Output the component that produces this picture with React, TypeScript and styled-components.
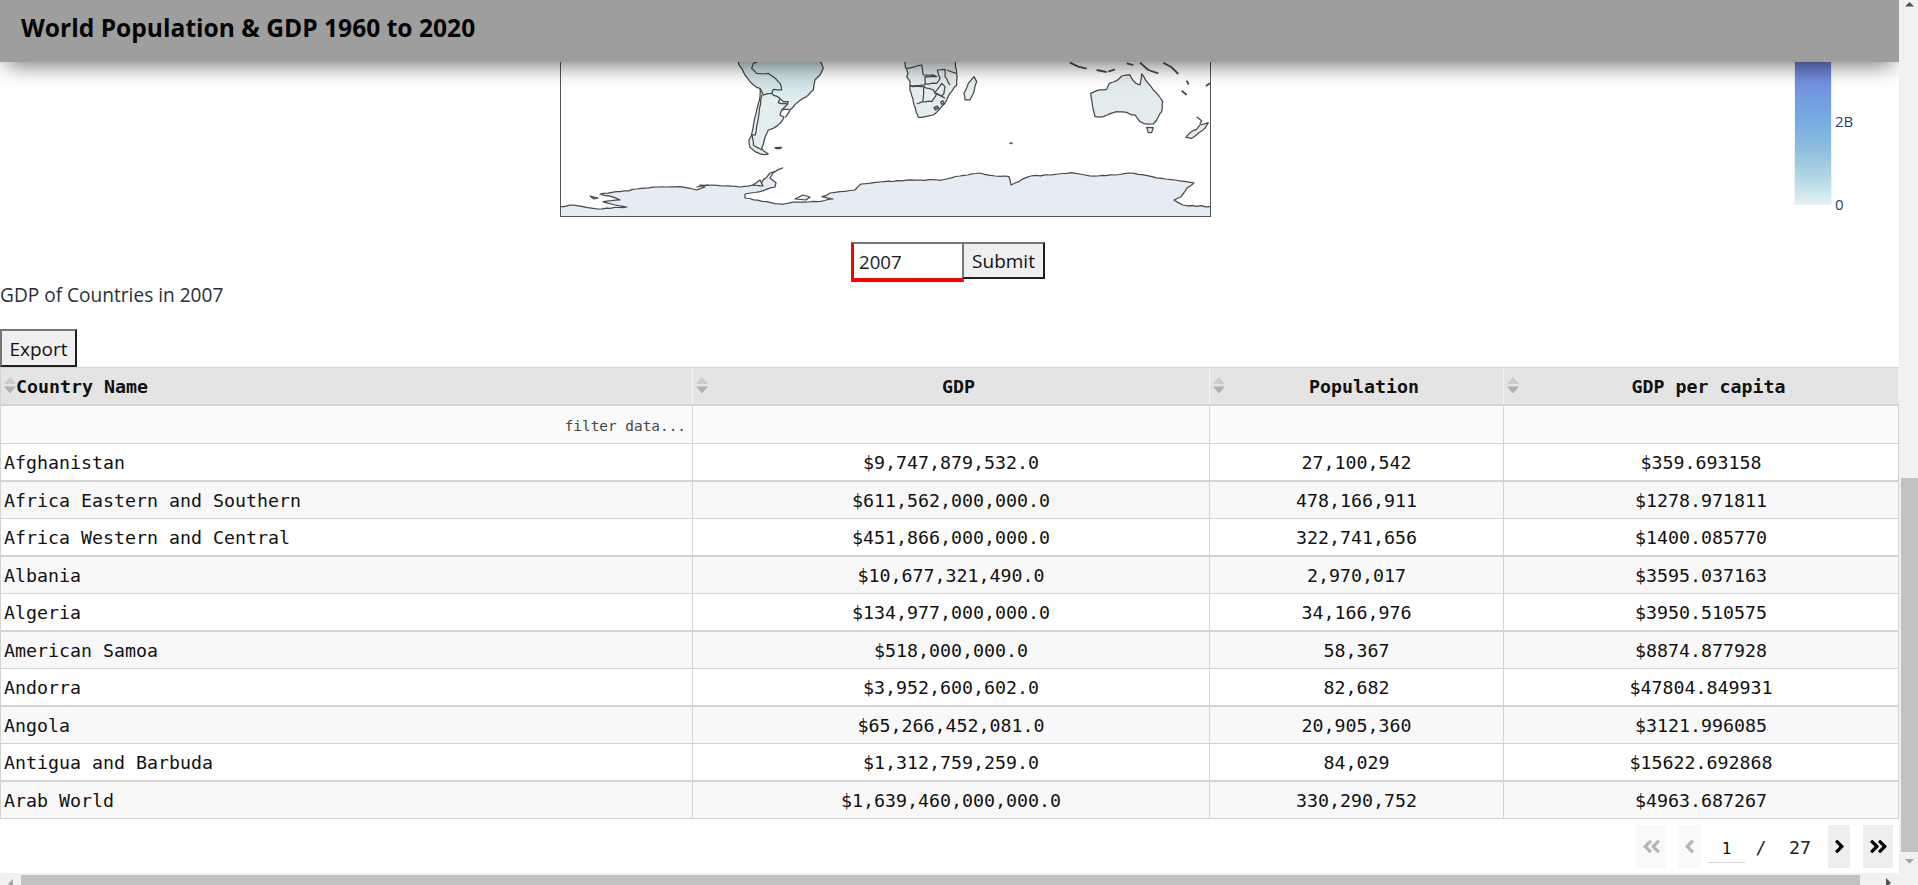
import React from "react";
import styled, { createGlobalStyle } from "styled-components";
import { FaAngleDoubleLeft, FaAngleDoubleRight, FaAngleLeft, FaAngleRight } from "react-icons/fa";

const Global = createGlobalStyle`
  html, body { margin: 0; padding: 0; overflow: hidden; background: #fff; }
  * { box-sizing: border-box; }
`;

const MONO = `"DejaVu Sans Mono", "Liberation Mono", monospace`;
const SANS = `"Open Sans", "Noto Sans", sans-serif`;

const Viewport = styled.div`
  width: 1918px; height: 885px; display: grid; overflow: hidden;
  grid-template-columns: 1899px 19px; grid-template-rows: 873px 12px;
  font-family: ${SANS}; color: #2a2f36;
`;
const Content = styled.main`position: relative; overflow: hidden; background: #fff;`;
const Header = styled.header`
  position: absolute; top: 0; left: 0; right: 0; height: 62px; z-index: 2;
  display: flex; align-items: center; padding: 0 0 8px 21px; background: #9e9e9e;
  box-shadow: 0 9px 22px -6px rgba(0,0,0,.55);
`;
const Title = styled.h1`margin: 0; font: 700 24.6px ${SANS}; color: #050505;`;

const MapSection = styled.section`display: flex; height: 217px; padding-left: 560px;`;
const MapSvg = styled.svg`display: block; width: 651px; height: 217px; flex: none;`;
const Colorbar = styled.div`
  flex: none; width: 38px; height: 205px; margin-left: 583px;
  border: 1px solid #eef2fb; border-top: 0;
  background: linear-gradient(to bottom, #4a3f94 0, #6a64bd 40px, #6d7ed4 62px, #7297e0 90px, #79aee0 125px, #8fbfdd 150px, #b3d7e4 178px, #e4f2f2 205px);
`;
const Ticks = styled.div`
  margin-left: 3px; height: 214px; display: flex; flex-direction: column; justify-content: flex-end;
  gap: 63px; font: 15px ${SANS}; color: #2a3f5f; line-height: 20px;
`;

const FormRow = styled.form`display: flex; align-items: flex-start; margin: 25px 0 0 851px; height: 40px;`;
const YearInput = styled.div`
  width: 113px; height: 40px; padding: 3px 0 0 5px; background: #fff; font-size: 18.6px; line-height: 30px; color: #1a1a1a;
  border-style: solid; border-color: #767676 #767676 #f00 #f00; border-width: 2px 2px 4px 3px;
`;
const NativeButton = styled.button`
  height: 37px; padding: 2px 0 0; background: #efefef; color: #111; font: 19px/31px ${SANS};
  border: 2px solid; border-color: #767676 #1f1f1f #1f1f1f #767676;
`;
const SubmitButton = styled(NativeButton)`width: 83px; margin-left: -2px;`;
const Caption = styled.p`margin: 1px 0 0; font-size: 19.1px; line-height: 25px; color: #2a2f36;`;
const ExportButton = styled(NativeButton)`display: block; width: 77px; height: 38px; margin-top: 21px;`;

const Table = styled.div`
  width: 1899px; font: 18.27px/1 ${MONO}; color: #111; border-top: 1px solid #d3d3d3; border-left: 1px solid #d3d3d3;
`;
const Row = styled.div<{ $h: number; $bg: string; $top?: number }>`
  display: grid; grid-template-columns: 692px 517px 294px 395px; height: ${p => p.$h}px;
  background: ${p => p.$bg}; border-top: ${p => p.$top ?? 0}px solid #d3d3d3;
  border-bottom: 1px solid #d3d3d3;
`;
const HeadCell = styled.div`
  display: flex; align-items: center; padding: 2px 0 0 3px; font-weight: 700; border-right: 1px solid #f4f4f4;
`;
const HeadLabel = styled.span<{ $left?: boolean }>`flex: 1; text-align: ${p => (p.$left ? "left" : "center")};`;
const SortIcon = styled.svg`flex: none; width: 12px; height: 17px; margin-top: -3px;`;
const FilterCell = styled.div`
  display: flex; align-items: center; justify-content: flex-end; padding: 3px 6px 0 0;
  font-size: 14.4px; color: #444; border-right: 1px solid #d3d3d3;
`;
const Cell = styled.div<{ $left?: boolean }>`
  display: flex; align-items: center; justify-content: ${p => (p.$left ? "flex-start" : "center")};
  padding-left: ${p => (p.$left ? "3px" : "0")}; padding-top: 3px; border-right: 1px solid #d3d3d3;
`;

const Pagination = styled.nav`
  display: flex; align-items: center; justify-content: flex-end; height: 43px; margin-top: 6px; padding-right: 6px;
  font: 18.27px ${MONO}; color: #222;
`;
const PageBtn = styled.div<{ $w: number; $off?: boolean; $gap?: number }>`
  width: ${p => p.$w}px; height: 43px; margin-left: ${p => p.$gap ?? 0}px; display: flex; align-items: center; justify-content: center;
  background: ${p => (p.$off ? "#f9f9f9" : "#eeeeee")}; color: ${p => (p.$off ? "#b5b5b5" : "#000")}; font-size: 21px;
`;
const PageInput = styled.div`
  width: 37px; height: 38px; margin-left: 7px; align-self: flex-start; padding-top: 14px; text-align: center;
  font-size: 16px; border-bottom: 1px solid #d3d3d3; color: #111;
`;
const Slash = styled.span`margin-left: 10px; width: 12px; text-align: center; padding-top: 2px;`;
const Total = styled.span`margin-left: 22px; width: 22px; text-align: center; padding-top: 3px;`;

const VBar = styled.div`position: relative; background: #f1f1f1; padding: 478px 0 21px 2px;`;
const VThumb = styled.div`width: 17px; height: 374px; background: #c1c1c1;`;
const HBar = styled.div`
  position: relative; background: #f1f1f1; padding: 2px 39px 0 21px;
`;
const HThumb = styled.div`height: 10px; background: #c1c1c1;`;
const Corner = styled.div`background: #f1f1f1;`;
const Arrow = styled.svg<{ $x: number; $y: number }>`
  position: absolute; left: ${p => p.$x}px; top: ${p => p.$y}px; width: 9px; height: 9px; display: block;
`;

/* Roughens a coarse coastline: splits long segments and nudges the new points,
   seeded so the drawing is the same on every render. */
function rough(d: string, amp: number, step: number): string {
  let seed = 7;
  const rnd = () => {
    seed = (seed * 16807) % 2147483647;
    return (seed / 2147483647 - 0.5) * 2 * amp;
  };
  const tokens = d.match(/[MLZ]|-?[\d.]+/g) ?? [];
  let out = "";
  let px = 0;
  let py = 0;
  for (let i = 0; i < tokens.length; i++) {
    const t = tokens[i];
    if (t === "Z") {
      out += "Z ";
    } else if (t === "M" || t === "L") {
      const x = parseFloat(tokens[++i]);
      const y = parseFloat(tokens[++i]);
      if (t === "L") {
        const n = Math.floor(Math.hypot(x - px, y - py) / step);
        for (let k = 1; k < n; k++) {
          out += `L ${(px + ((x - px) * k) / n + rnd()).toFixed(1)} ${(py + ((y - py) * k) / n + rnd()).toFixed(1)} `;
        }
      }
      out += `${t} ${x} ${y} `;
      px = x;
      py = y;
    }
  }
  return out;
}

const outline = { fill: "none", stroke: "#484848", strokeWidth: 1.25, vectorEffect: "non-scaling-stroke" as const, strokeLinejoin: "round" as const };
const land = (fill: string) => ({ ...outline, fill });
const zr = (d: string) => rough(d, 1.6, 9);

const WorldMap = () => (
  <MapSvg viewBox="560 0 651 217">
    <defs>
      <linearGradient id="saFill" gradientUnits="userSpaceOnUse" x1="0" y1="60" x2="0" y2="130">
        <stop offset="0" stopColor="#cfe2e7" />
        <stop offset="1" stopColor="#e3efef" />
      </linearGradient>
    </defs>
    {/* South America */}
    <g transform="translate(730 60) scale(.3333)">
      <path {...land("url(#saFill)")} d={zr("M25 0 L25 8 L35 25 L45 45 L60 65 L80 82 L90 85 L90 110 L84 135 L80 150 L72 185 L66 218 L57 240 L60 262 L75 275 L95 283 L115 282 L100 272 L95 265 L103 240 L115 210 L130 205 L150 190 L162 172 L150 165 L155 150 L175 148 L180 150 L205 125 L235 105 L250 90 L255 60 L270 45 L280 25 L275 10 L260 0 Z")} />
      <path {...outline} d={zr("M92 0 L70 10 L65 25 L80 40 L100 42 L115 40 L130 50 L150 70 L155 90 L130 88 L125 100 L100 105 L90 85")} />
      <path {...outline} d={zr("M125 100 L150 115 L160 125 L175 125 L170 135 L155 150")} />
      <path {...outline} d={zr("M150 115 L145 128 L175 133")} />
      <path {...outline} d={zr("M96 105 L88 150 L82 190 L76 225 L66 225 L70 255 L95 270")} />
      <path {...outline} d="M166 172 L180 152" />
      <path {...land("#555")} d="M135 263 L155 262 L150 266 L138 266 Z" />
    </g>
    {/* Africa and Madagascar */}
    <g transform="translate(900 60) scale(.3333)">
      <path {...land("#e2eded")} d={zr("M15 0 L15 10 L24 40 L20 50 L30 65 L30 90 L40 125 L48 155 L55 172 L75 170 L100 165 L125 140 L140 120 L150 100 L170 75 L170 40 L165 0 Z")} />
      <path {...outline} d={zr("M20 25 L45 20 L65 15 L70 45 L100 45 L110 50 L75 50 L75 75 L30 78")} />
      <path {...outline} d={zr("M30 78 L72 80 L68 125 L95 125 L110 100 L135 115")} />
      <path {...outline} d={zr("M72 80 L100 90 L105 100 L125 108 L132 100 L135 80 L125 70 L105 97")} />
      <path {...outline} d={zr("M75 72 L110 70 L120 55 L112 30 L135 28 L135 50 L150 75")} />
      <path {...outline} d="M140 30 L168 40" />
      <path {...outline} d="M68 125 L50 132" />
      <path {...land("#888")} d="M102 143 L112 138 L116 144 L106 150 Z" />
      <path {...land("#e2eded")} d="M122 127 L128 122 L132 128 L126 134 Z" />
      <path {...land("#e4eeee")} d={zr("M222 50 L230 65 L222 95 L210 120 L195 120 L192 100 L205 70 Z")} />
    </g>
    {/* Australia, New Zealand, islands */}
    <g transform="translate(900 50) scale(.3333)">
      <path {...land("#e3ecec")} d={zr("M572 130 L590 122 L620 118 L628 100 L650 92 L665 78 L690 75 L695 85 L708 100 L720 105 L725 72 L745 100 L760 120 L775 135 L788 155 L785 185 L770 210 L760 222 L735 222 L720 215 L705 195 L695 195 L680 187 L650 185 L610 200 L585 200 L578 170 Z")} />
      <path {...land("#e3ecec")} d="M740 232 L760 233 L755 248 L745 248 Z" />
      <path {...land("#e3ecec")} d={zr("M858 262 L870 248 L890 238 L900 225 L925 218 L915 235 L895 250 L875 265 Z")} />
      <path {...outline} d="M890 200 L905 212 L900 222" />
      <path {...outline} d="M510 38 L535 50 L560 56 M590 60 L620 66 M625 65 L645 58 M720 38 L745 60 L775 70 M790 38 L815 52 L835 72 M860 92 L866 104 M845 122 L860 135 M918 108 L930 100 M680 40 L700 45" strokeWidth="1.8" />
      <ellipse cx="333" cy="280" rx="6" ry="3" fill="#666" />
    </g>
    {/* Antarctica */}
    <path fill="#e5ecf6" d={rough("M560.5 206.7 L573 205 L583 206.7 L598 209 L627 207 L615 205 L603 201.7 L620 200 L612 196.7 L600 194 L620 191.7 L637 189 L657 187 L680 186.7 L697 190 L705 187 L700 185 L712 185 L723 186 L740 187 L753 185 L760 186 L763 180 L770 173 L782.7 168 L773 173 L770 178 L776 182.7 L775 187 L760 191.7 L745 194 L745 198 L767 201.7 L780 204 L797 202 L817 201.7 L833 199 L822 196.7 L830 193 L840 191.7 L855 190 L861 184 L880 182 L897 180.7 L920 180 L942 180 L960 176 L980 173 L995 176 L1009 176.7 L1011 185 L1015 183 L1031 176 L1050 175 L1071 172.7 L1085 175 L1098 176 L1115 175 L1129 173 L1152 176.7 L1175 180 L1194 183 L1187 188 L1181 196.7 L1174 200 L1183 205 L1210.5 206.7", 0.5, 4) + " L 1210.5 216.5 L 560.5 216.5 Z"} />
    <path {...outline} d={rough("M560.5 206.7 L573 205 L583 206.7 L598 209 L627 207 L615 205 L603 201.7 L620 200 L612 196.7 L600 194 L620 191.7 L637 189 L657 187 L680 186.7 L697 190 L705 187 L700 185 L712 185 L723 186 L740 187 L753 185 L760 186 L763 180 L770 173 L782.7 168 L773 173 L770 178 L776 182.7 L775 187 L760 191.7 L745 194 L745 198 L767 201.7 L780 204 L797 202 L817 201.7 L833 199 L822 196.7 L830 193 L840 191.7 L855 190 L861 184 L880 182 L897 180.7 L920 180 L942 180 L960 176 L980 173 L995 176 L1009 176.7 L1011 185 L1015 183 L1031 176 L1050 175 L1071 172.7 L1085 175 L1098 176 L1115 175 L1129 173 L1152 176.7 L1175 180 L1194 183 L1187 188 L1181 196.7 L1174 200 L1183 205 L1210.5 206.7", 0.5, 4)} />
    <path {...land("#e5ecf6")} d="M753 185 L760 180 L763 186 Z M795 199 L803 195 L810 197 L806 200 Z" />
    <path {...land("#999")} d="M590 196 L598 198 L594 199 Z M697 187 L708 185 L700 186 Z" />
    <rect x="560.5" y="0" width="650" height="216.5" fill="none" stroke="#555" strokeWidth="1" />
  </MapSvg>
);

const Sort = () => (
  <SortIcon viewBox="0 0 12 17">
    <path d="M6 0 L12 7 L0 7 Z" fill="#cbcbcb" />
    <path d="M0 9.5 L12 9.5 L6 16.5 Z" fill="#b0b0b0" />
  </SortIcon>
);

const rows = [
  ["Afghanistan", "$9,747,879,532.0", "27,100,542", "$359.693158"],
  ["Africa Eastern and Southern", "$611,562,000,000.0", "478,166,911", "$1278.971811"],
  ["Africa Western and Central", "$451,866,000,000.0", "322,741,656", "$1400.085770"],
  ["Albania", "$10,677,321,490.0", "2,970,017", "$3595.037163"],
  ["Algeria", "$134,977,000,000.0", "34,166,976", "$3950.510575"],
  ["American Samoa", "$518,000,000.0", "58,367", "$8874.877928"],
  ["Andorra", "$3,952,600,602.0", "82,682", "$47804.849931"],
  ["Angola", "$65,266,452,081.0", "20,905,360", "$3121.996085"],
  ["Antigua and Barbuda", "$1,312,759,259.0", "84,029", "$15622.692868"],
  ["Arab World", "$1,639,460,000,000.0", "330,290,752", "$4963.687267"],
];

export default function App() {
  return (
    <>
      <Global />
      <Viewport>
        <Content>
          <Header><Title>World Population &amp; GDP 1960 to 2020</Title></Header>
          <MapSection>
            <WorldMap />
            <Colorbar />
            <Ticks><span>2B</span><span>0</span></Ticks>
          </MapSection>
          <FormRow onSubmit={e => e.preventDefault()}>
            <YearInput>2007</YearInput>
            <SubmitButton type="button">Submit</SubmitButton>
          </FormRow>
          <Caption>GDP of Countries in 2007</Caption>
          <ExportButton type="button">Export</ExportButton>
          <Table>
            <Row $h={38} $bg="#e4e4e4" style={{ borderBottomWidth: 2 }}>
              <HeadCell><Sort /><HeadLabel $left>Country Name</HeadLabel></HeadCell>
              <HeadCell><Sort /><HeadLabel>GDP</HeadLabel></HeadCell>
              <HeadCell><Sort /><HeadLabel>Population</HeadLabel></HeadCell>
              <HeadCell><Sort /><HeadLabel>GDP per capita</HeadLabel></HeadCell>
            </Row>
            <Row $h={37.5} $bg="#fafafa">
              <FilterCell>filter data...</FilterCell>
              <FilterCell /><FilterCell /><FilterCell />
            </Row>
            {rows.map((r, i) => (
              <Row key={r[0]} $h={37.5} $bg={i % 2 ? "#f8f8f8" : "#fff"} $top={i % 2 ? 1 : 0}>
                <Cell $left>{r[0]}</Cell>
                <Cell>{r[1]}</Cell>
                <Cell>{r[2]}</Cell>
                <Cell>{r[3]}</Cell>
              </Row>
            ))}
          </Table>
          <Pagination>
            <PageBtn $w={30} $off><FaAngleDoubleLeft /></PageBtn>
            <PageBtn $w={23} $off $gap={12}><FaAngleLeft /></PageBtn>
            <PageInput>1</PageInput>
            <Slash>/</Slash>
            <Total>27</Total>
            <PageBtn $w={22} $gap={17}><FaAngleRight /></PageBtn>
            <PageBtn $w={30} $gap={13}><FaAngleDoubleRight /></PageBtn>
          </Pagination>
        </Content>
        <VBar>
          <Arrow $x={6} $y={0} viewBox="0 0 9 9"><path d="M4.5 2 L9 6.5 L0 6.5 Z" fill="#505050" /></Arrow>
          <VThumb />
          <Arrow $x={6} $y={858} viewBox="0 0 9 9"><path d="M0 1 L9 1 L4.5 5.5 Z" fill="#a3a3a3" /></Arrow>
        </VBar>
        <HBar>
          <Arrow $x={6} $y={5} viewBox="0 0 9 9"><path d="M7 1 L7 9 L2 6 Z" fill="#a3a3a3" /></Arrow>
          <HThumb />
          <Arrow $x={1884} $y={5} viewBox="0 0 9 9"><path d="M2 0 L2 9 L7 5 Z" fill="#505050" /></Arrow>
        </HBar>
        <Corner />
      </Viewport>
    </>
  );
}
